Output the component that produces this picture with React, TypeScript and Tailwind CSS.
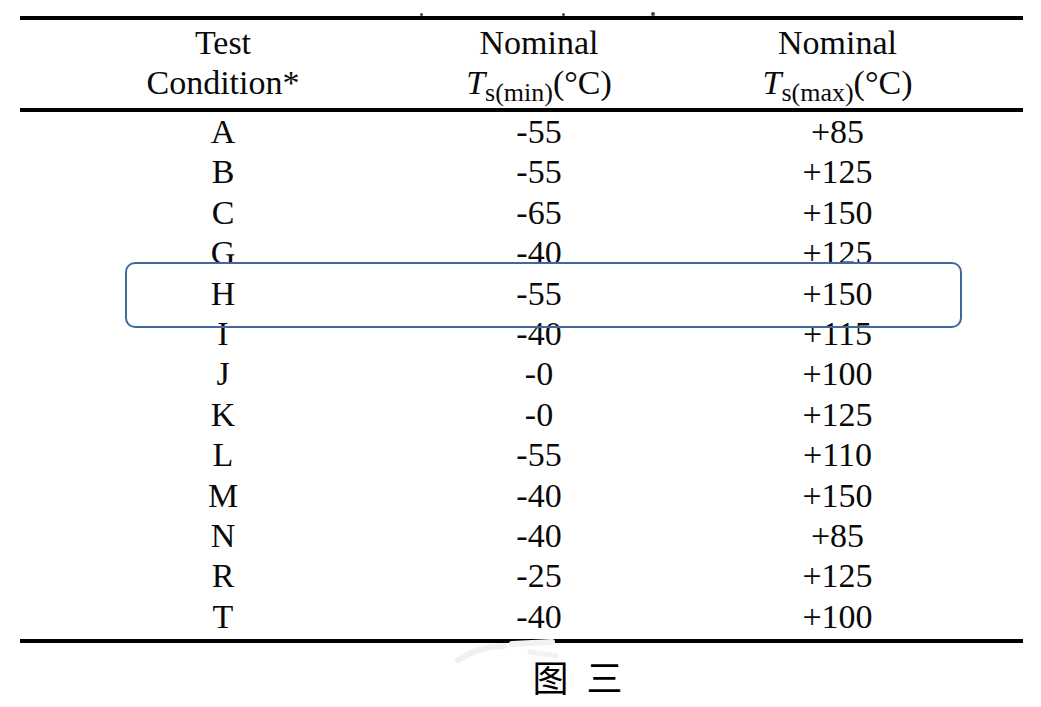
const rows: [string, string, string][] = [
  ["A", "-55", "+85"],
  ["B", "-55", "+125"],
  ["C", "-65", "+150"],
  ["G", "-40", "+125"],
  ["H", "-55", "+150"],
  ["I", "-40", "+115"],
  ["J", "-0", "+100"],
  ["K", "-0", "+125"],
  ["L", "-55", "+110"],
  ["M", "-40", "+150"],
  ["N", "-40", "+85"],
  ["R", "-25", "+125"],
  ["T", "-40", "+100"],
]

const cols = "grid grid-cols-[406px_226px_1fr] text-center"

function TempHead({ sub }: { sub: string }) {
  return (
    <span className="whitespace-nowrap">
      <i>T</i>
      <span className="relative top-[7px] text-[26px] leading-none">s({sub})</span>
      (°C)
    </span>
  )
}

export default function App() {
  return (
    <div className="relative w-[1041px] h-[707px] bg-white text-[#0a0a0a] font-['Liberation_Serif','Times_New_Roman',serif] text-[34px]">
      <div className="ml-[20px] w-[1003px] pt-[16px]">
        <div className="border-t-[4px] border-b-[4px] border-black">
          <div className={`${cols} leading-[40px] pt-[3px] pb-[5px]`}>
            <div>
              Test
              <br />
              Condition*
            </div>
            <div>
              Nominal
              <br />
              <TempHead sub="min" />
            </div>
            <div>
              Nominal
              <br />
              <TempHead sub="max" />
            </div>
          </div>
        </div>
        <div className="border-b-[4px] border-black pb-[2px]">
          {rows.map(([c, lo, hi]) => (
            <div key={c} className={`${cols} leading-[40.4px]`}>
              <div>{c}</div>
              <div>{lo}</div>
              <div>{hi}</div>
            </div>
          ))}
        </div>
        <div className="flex justify-center pl-[112px] mt-[15px] text-[36px] leading-[36px] font-['Noto_Sans_CJK_SC',sans-serif] text-black [word-spacing:10px]">
          图 三
        </div>
      </div>

      {/* cut-off marks of the title above the table */}
      <span className="absolute left-[420px] top-[13px] w-[3px] h-[3px] rounded-full bg-[#444]" />
      <span className="absolute left-[562px] top-[13px] w-[3px] h-[3px] rounded-full bg-[#444]" />
      <span className="absolute left-[651px] top-[12px] w-[4px] h-[4px] rounded-full bg-[#444]" />

      {/* highlight box round row H */}
      <div className="absolute left-[125px] top-[262px] w-[837px] h-[66px] rounded-[10px] border-2 border-[#3d6a9b]" />

      {/* faint scan watermark */}
      <svg className="absolute left-[452px] top-[634px]" width="115" height="32" viewBox="0 0 115 32">
        <path d="M6 26 C 22 16, 36 12, 52 12" stroke="#f0f0f0" strokeWidth="6" fill="none" strokeLinecap="round" />
        <path d="M60 10 L 100 8" stroke="#f2f2f2" strokeWidth="6" fill="none" strokeLinecap="round" />
        <path d="M78 18 L 104 22" stroke="#f2f2f2" strokeWidth="5" fill="none" strokeLinecap="round" />
      </svg>
    </div>
  )
}
